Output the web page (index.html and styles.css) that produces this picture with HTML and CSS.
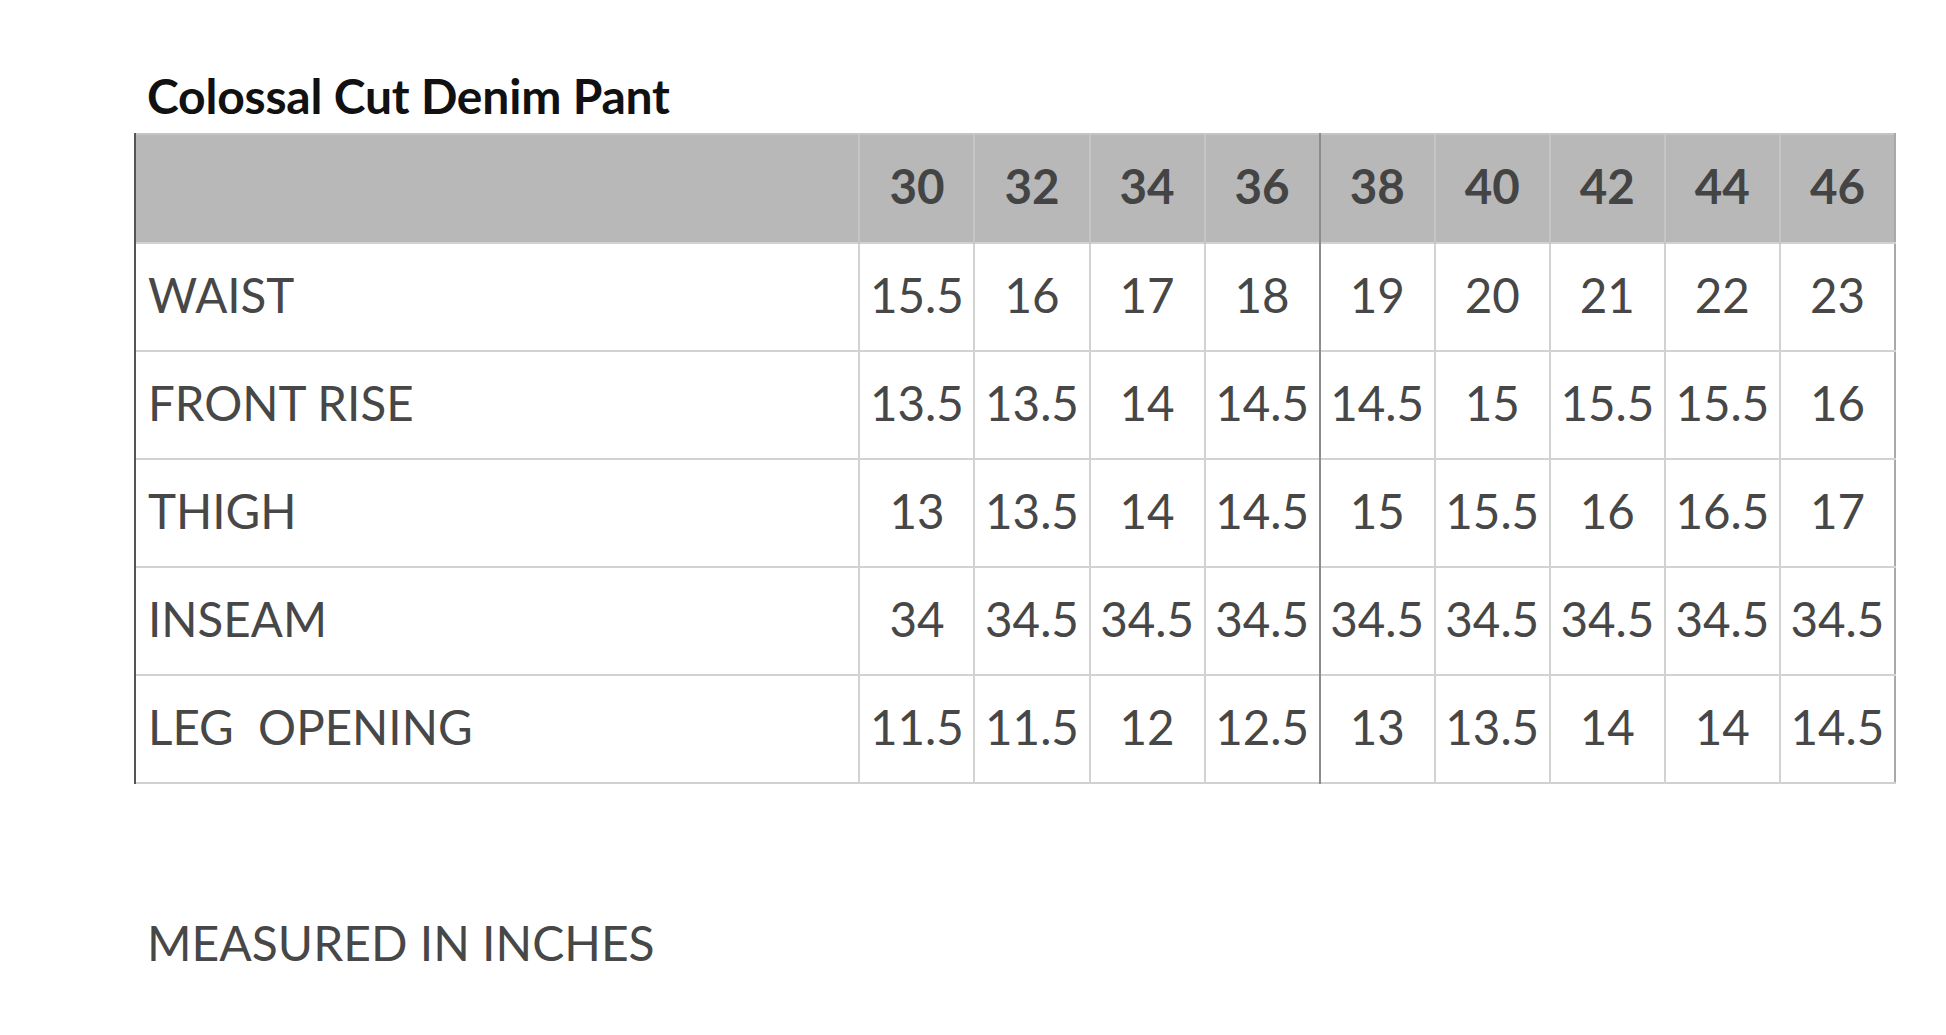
FILE: index.html
```html
<!DOCTYPE html>
<html lang="en">
<head>
<meta charset="utf-8">
<title>Colossal Cut Denim Pant</title>
<link rel="stylesheet" href="styles.css">
</head>
<body>
<main class="page">
  <h1 class="title">Colossal Cut Denim Pant</h1>
  <table class="size-table">
    <colgroup>
      <col class="col-label">
      <col class="col-size"><col class="col-size"><col class="col-size"><col class="col-size">
      <col class="col-size"><col class="col-size"><col class="col-size"><col class="col-size"><col class="col-size">
    </colgroup>
    <thead>
      <tr>
        <th class="label"></th>
        <th>30</th><th>32</th><th>34</th><th class="split">36</th><th>38</th><th>40</th><th>42</th><th>44</th><th class="last">46</th>
      </tr>
    </thead>
    <tbody>
      <tr>
        <td class="label">WAIST</td>
        <td>15.5</td><td>16</td><td>17</td><td class="split">18</td><td>19</td><td>20</td><td>21</td><td>22</td><td class="last">23</td>
      </tr>
      <tr>
        <td class="label">FRONT RISE</td>
        <td>13.5</td><td>13.5</td><td>14</td><td class="split">14.5</td><td>14.5</td><td>15</td><td>15.5</td><td>15.5</td><td class="last">16</td>
      </tr>
      <tr>
        <td class="label">THIGH</td>
        <td>13</td><td>13.5</td><td>14</td><td class="split">14.5</td><td>15</td><td>15.5</td><td>16</td><td>16.5</td><td class="last">17</td>
      </tr>
      <tr>
        <td class="label">INSEAM</td>
        <td>34</td><td>34.5</td><td>34.5</td><td class="split">34.5</td><td>34.5</td><td>34.5</td><td>34.5</td><td>34.5</td><td class="last">34.5</td>
      </tr>
      <tr>
        <td class="label">LEG&nbsp; OPENING</td>
        <td>11.5</td><td>11.5</td><td>12</td><td class="split">12.5</td><td>13</td><td>13.5</td><td>14</td><td>14</td><td class="last">14.5</td>
      </tr>
    </tbody>
  </table>
  <p class="note">MEASURED IN INCHES</p>
</main>
</body>
</html>
```
FILE: styles.css
```css
html, body {
  margin: 0;
  padding: 0;
  background: #ffffff;
}

body {
  font-family: Lato, "Open Sans", "Liberation Sans", sans-serif;
  color: #474747;
}

.page {
  padding: 72px 0 0 134px;
}

.title {
  margin: 0 0 13px 13px;
  font-size: 48px;
  line-height: 48px;
  font-weight: 700;
  color: #111111;
  letter-spacing: -0.2px;
}

.size-table {
  width: 1762px;
  table-layout: fixed;
  border-collapse: collapse;
  border-left: 2px solid #555555;
  border-top: 2px solid #c4c4c4;
  border-right: 2px solid #a9a9a9;
  border-bottom: 2px solid #d0d0d0;
}

.col-label {
  width: 724px;
}

.col-size {
  width: 115px;
}

.size-table th,
.size-table td {
  padding: 0 0 5px 0;
  text-align: center;
  font-size: 47.5px;
  line-height: 1;
  white-space: nowrap;
}

.size-table thead tr {
  height: 109px;
}

.size-table tbody tr {
  height: 108px;
}

.size-table th {
  background: #b8b8b8;
  font-weight: 700;
  color: #444444;
  border-left: 2px solid #c6c6c6;
}

.size-table td {
  font-weight: 400;
  border-left: 2px solid #d2d2d2;
  border-top: 2px solid #d2d2d2;
}

.size-table .label {
  text-align: left;
  padding-left: 12px;
  border-left: 2px solid #555555;
}

.size-table th.split,
.size-table td.split {
  border-right: 2px solid #8c8c8c;
}

.note {
  margin: 131px 0 0 13px;
  font-size: 48px;
  line-height: 55px;
  font-weight: 400;
  color: #474747;
}
```
